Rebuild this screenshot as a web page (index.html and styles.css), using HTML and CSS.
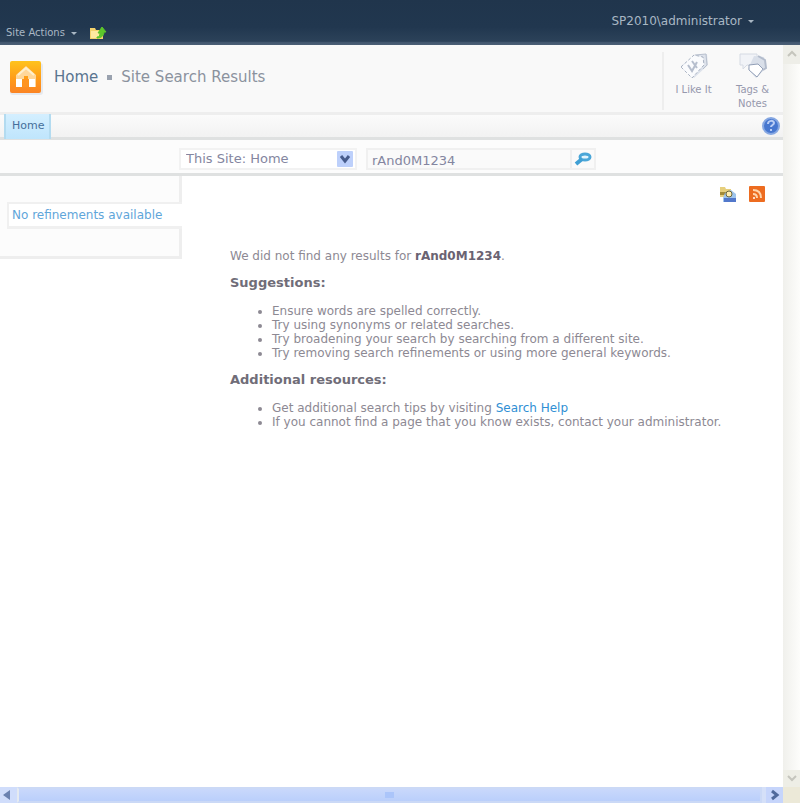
FILE: index.html
```html
<!DOCTYPE html>
<html lang="en">
<head>
<meta charset="utf-8">
<title>Site Search Results</title>
<link rel="stylesheet" href="styles.css">
</head>
<body>
<header class="topbar">
  <div class="actions">
    <button class="menu" type="button">Site Actions <span class="caret"></span></button>
    <button class="up" type="button" aria-label="Navigate up">
      <svg width="18" height="14" viewBox="0 0 18 14"><path d="M1 4V2h5l1 2h7v9H1z" fill="#f5d36c"/><path d="M2 5h8v7H2z" fill="#ffe9a0"/><path d="M8 11c2 0 3-1 3-4H9l4-6 4 5h-2c0 4-3 6-7 6z" fill="#5cc62b" stroke="#5cc62b"/></svg>
    </button>
  </div>
  <button class="menu user" type="button">SP2010\administrator <span class="caret"></span></button>
</header>
<div class="window">
  <main class="page">
    <section class="title-row">
      <svg class="logo" width="34" height="36" viewBox="0 0 34 36"><defs><linearGradient id="o" x1="0" y1="0" x2="0" y2="1"><stop offset="0" stop-color="#ffc31c"/><stop offset=".55" stop-color="#ff9c18"/><stop offset="1" stop-color="#fb8424"/></linearGradient></defs><rect x="1" y="3" width="33" height="32" rx="3" fill="#e6e9ee"/><rect x="1" y="1" width="31" height="32" rx="2" fill="url(#o)"/><path d="M17 6L7 15v12h6v-8h2v-3h4v3h2v8h6V15z" fill="#ffd79a"/><path d="M14 19h5v8h-5z" fill="#ff9420"/><path d="M7 19h6v8H7zM20 19h6v8h-6z" fill="#fff"/><path d="M9 15l8-7 8 7" fill="none" stroke="#fff0cd" stroke-width="2"/></svg>
      <h1><a href="#">Home</a> <span class="sep"></span> Site Search Results</h1>
      <div class="social">
        <button type="button"><svg width="30" height="28" viewBox="0 0 30 28"><path d="M2 14L16 3l12-1 1 11-14 13z" fill="#dde2eb"/><path d="M2 15L15 3l9 2 1 8-12 13z" fill="#fafbfd" stroke="#a9b2c2" stroke-dasharray="3 2"/><path d="M16 3l11-1 1 11-4 4" fill="none" stroke="#b8c0ce"/><path d="M9 13l4 6 5-9M13 9l5 7" fill="none" stroke="#b6becd" stroke-width="2"/></svg><span>I Like It</span></button>
        <button type="button"><svg width="30" height="28" viewBox="0 0 30 28"><path d="M2 2h17v11H9l-4 4v-4H2z" fill="#f1f3f7" stroke="#d5dae3"/><path d="M16 4l10 1 2 11-10 10-8-9z" fill="#d9dfe9"/><path d="M11 13l9-1 5 5-6 8-8-7z" fill="#fff" stroke="#929fb7"/><path d="M20 4l7 4 1 8-3 2" fill="none" stroke="#b3bccc" stroke-width="2"/></svg><span>Tags &amp;<br>Notes</span></button>
      </div>
    </section>
    <nav class="tabs">
      <a class="tab" href="#">Home</a>
      <a class="help" href="#" aria-label="Help"><svg width="18" height="18" viewBox="0 0 18 18"><circle cx="9" cy="9" r="8" fill="#4777cf" stroke="#87a8e2" stroke-width="2"/><path d="M6 7c0-4 6-4 6-1 0 2-3 2-3 4" fill="none" stroke="#b9cdf5" stroke-width="2"/><rect x="8" y="12" width="2" height="2" fill="#b9cdf5"/></svg></a>
    </nav>
    <form class="search">
      <div class="scope-wrap">
        <select class="scope" aria-label="Search scope"><option>This Site: Home</option></select>
        <svg class="arrow" width="16" height="16" viewBox="0 0 16 16"><rect width="16" height="16" rx="1" fill="#bdd0fb"/><path d="M4 5l4 5 4-5" fill="none" stroke="#465b8c" stroke-width="3"/></svg>
      </div>
      <div class="query-wrap">
        <input class="query" type="text" value="rAnd0M1234" aria-label="Search">
        <button class="go" type="button" aria-label="Search"><svg width="18" height="16" viewBox="0 0 18 16"><ellipse cx="11" cy="6" rx="5" ry="3" fill="#e2f4fd" stroke="#4aa6d8" stroke-width="3"/><path d="M8 8l-6 5" stroke="#3f9fd4" stroke-width="4"/></svg></button>
      </div>
    </form>
    <div class="body">
      <aside class="side"><div class="refine">No refinements available</div></aside>
      <section class="results">
        <div class="tools">
          <a href="#" aria-label="Search from Windows"><svg width="16" height="16" viewBox="0 0 16 16"><path d="M0 1h5l1 2h5v8H0z" fill="#e6cf7d"/><path d="M0 6h11v3H0z" fill="#a38b38"/><path d="M5 7l6-3 5 4v8H3v-4z" fill="#9fc5ed"/><path d="M4 12h12v4H4z" fill="#5278cb"/><circle cx="9" cy="8" r="3" fill="#ffeeb0" stroke="#6a653f"/></svg></a>
          <a href="#" aria-label="RSS"><svg width="16" height="16" viewBox="0 0 16 16"><rect width="16" height="16" rx="1" fill="#ed6c20"/><path d="M4 4c5 0 8 3 8 8M4 8c3 0 4 2 4 4" fill="none" stroke="#ffd5ab" stroke-width="2"/><circle cx="5" cy="12" r="1" fill="#fff"/></svg></a>
        </div>
        <div class="message">
          <p>We did not find any results for <strong>rAnd0M1234</strong>.</p>
          <h2>Suggestions:</h2>
          <ul>
            <li>Ensure words are spelled correctly.</li>
            <li>Try using synonyms or related searches.</li>
            <li>Try broadening your search by searching from a different site.</li>
            <li>Try removing search refinements or using more general keywords.</li>
          </ul>
          <h2>Additional resources:</h2>
          <ul>
            <li>Get additional search tips by visiting <a href="#">Search Help</a></li>
            <li>If you cannot find a page that you know exists, contact your administrator.</li>
          </ul>
        </div>
      </section>
    </div>
  </main>
  <div class="vscroll">
    <svg width="17" height="19" viewBox="0 0 17 19"><rect width="17" height="19" fill="#eeeee8"/><path d="M5 11l4-4 4 4" fill="none" stroke="#c5c5bd" stroke-width="2"/></svg>
    <svg width="17" height="17" viewBox="0 0 17 17"><rect width="17" height="17" fill="#eeeee6"/><path d="M5 6l4 4 4-4" fill="none" stroke="#c5c5bd" stroke-width="2"/></svg>
  </div>
  <div class="hscroll">
    <svg width="17" height="16" viewBox="0 0 17 16"><rect width="17" height="16" fill="#d0ddfb"/><path d="M10 3v10L3 8z" fill="#6b82b0"/></svg>
    <div class="thumb"><span class="grip"></span></div>
    <svg width="17" height="16" viewBox="0 0 17 16"><rect width="17" height="16" fill="#c6d5fb"/><path d="M6 4l5 4-5 4" fill="none" stroke="#506a9c" stroke-width="3"/></svg>
  </div>
  <div class="corner"></div>
</div>
</body>
</html>
```
FILE: styles.css
```css
* { box-sizing: border-box; }
body {
  margin: 0;
  height: 100vh;
  display: flex;
  flex-direction: column;
  font: 12px/14px "DejaVu Sans", Verdana, sans-serif;
  color: #8d8993;
  background: #fff;
}
button, input, select { font: inherit; color: inherit; border: 0; background: none; padding: 0; margin: 0; }
a { color: #2f8fd4; text-decoration: none; }
svg { display: block; flex: none; }

.topbar {
  flex: none;
  height: 45px;
  display: flex;
  justify-content: space-between;
  align-items: flex-start;
  padding: 0 46px 0 6px;
  background: linear-gradient(#20354c, #21374f 60%, #2c4259 92%, #40556d 93%, #4b5f76);
}
.actions { display: flex; align-items: center; gap: 12px; padding-top: 26px; }
.menu { display: flex; align-items: center; gap: 6px; font-size: 10px; color: #a9b7c4; }
.user { padding-top: 14px; font-size: 12px; }
.caret { border: 3px solid transparent; border-top-color: #a9b7c4; border-bottom: 0; }

.window { flex: 1; min-height: 0; display: grid; grid-template: 1fr 16px / 1fr 17px; }
.page { min-width: 0; overflow: hidden; display: flex; flex-direction: column; }

.title-row {
  flex: none;
  height: 70px;
  display: flex;
  padding: 7px 1px 0 9px;
  background: #f9f9f9;
  border-bottom: 3px solid #eee;
}
.logo { margin-top: 8px; }
h1 { flex: 1; display: flex; align-items: center; gap: 9px; height: 50px; margin: 0 0 0 11px; font-size: 15px; font-weight: 400; color: #8b929e; }
h1 a { color: #5a7590; }
.sep { width: 5px; height: 5px; background: #9aa2af; }
.social { display: flex; height: 58px; border-left: 2px solid #eee; }
.social button { width: 59px; display: flex; flex-direction: column; align-items: center; gap: 3px; font-size: 10px; color: #9698ad; }
.social svg { height: 28px; }

.tabs {
  flex: none;
  height: 25px;
  display: flex;
  justify-content: space-between;
  align-items: center;
  padding: 0 3px 0 4px;
  background: linear-gradient(#fbfbfb, #f2f2f2);
  border-bottom: 3px solid #dfe1e1;
}
.tab { display: flex; align-items: center; height: 25px; padding: 0 5px 0 6px; font-size: 11px; color: #466f9b; background: linear-gradient(#d4efff, #bfe5fc); border: 2px solid #b3dbf0; border-width: 0 2px; }

.search { flex: none; display: flex; gap: 9px; height: 36px; padding: 8px 0 0 179px; font-size: 13px; background: #fcfcfc; border-bottom: 3px solid #dfe1e1; }
.scope-wrap { display: flex; align-items: center; width: 178px; height: 22px; padding-right: 2px; background: #fff; border: 2px solid #f2f2f2; }
.scope { flex: 1; height: 18px; padding-left: 5px; appearance: none; color: #8486a0; outline: none; }
.query-wrap { display: flex; width: 230px; height: 22px; background: #fafafa; border: 2px solid #f0f0f0; }
.query { flex: 1; min-width: 0; height: 20px; padding: 1px 0 0 4px; color: #8486a0; outline: none; }
.go { width: 24px; display: flex; align-items: center; justify-content: center; border-left: 2px solid #efefef; }

.body { flex: 1; display: flex; align-items: flex-start; }
.side { flex: none; width: 182px; height: 83px; padding: 26px 0 0 7px; background: #fcfcfc; border: 3px solid #eee; border-width: 0 3px 3px 0; }
.refine { margin-right: -3px; height: 27px; padding: 4px 3px; white-space: nowrap; color: #5fa6da; background: #fff; border: 3px solid #f0f0f0; border-right: 0; border-width: 2px 0 3px 2px; }
.results { flex: 1; min-width: 0; }
.tools { display: flex; justify-content: flex-end; gap: 13px; padding: 10px 18px 0 0; }
.message { padding: 47px 0 0 48px; white-space: nowrap; }
.message p { margin: 0 0 13px; }
strong { color: #6a6372; }
h2 { margin: 0 0 14px; font-size: 13px; line-height: 14px; color: #706d78; }
ul { margin: 0 0 13px; padding-left: 42px; }

.vscroll { display: flex; flex-direction: column; justify-content: space-between; background: linear-gradient(90deg, #f0f0ec, #fdfdfb); }
.hscroll { display: flex; background: #d5e0f8; }
.thumb { flex: 1; display: flex; align-items: center; justify-content: center; margin-right: 4px; border: 2px solid #cbd9f6; border-left-color: #e5eaf0; background: linear-gradient(#c9d8fb, #bacffb); }
.grip { width: 9px; height: 6px; background: #abc5fa; }
.corner { background: #ece9d8; }
```
